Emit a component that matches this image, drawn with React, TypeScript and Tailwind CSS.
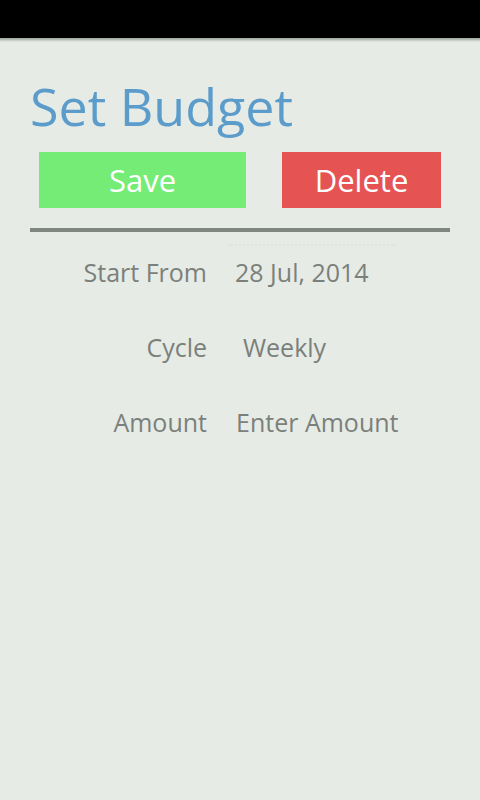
export default function App() {
  const rows = [
    { label: 'Start From', value: '28 Jul, 2014', pad: 'pl-[28px]' },
    { label: 'Cycle', value: 'Weekly', pad: 'pl-[36px]' },
    { label: 'Amount', value: 'Enter Amount', pad: 'pl-[29px]' },
  ];

  return (
    <div className="w-[480px] h-[800px] bg-[#e6ebe6] flex flex-col font-['Open_Sans','Noto_Sans',sans-serif]">
      {/* status bar */}
      <div className="h-[38px] bg-black shrink-0" />
      <div className="h-[4px] bg-gradient-to-b from-[#9aa09a] to-[#e6ebe6] shrink-0" />

      <div className="flex flex-col px-[30px]">
        <h1 className="mt-[34px] text-[52px] leading-[60px] text-[#5b9ccb]">Set Budget</h1>

        <div className="mt-[16px] flex justify-between pl-[9px] pr-[9px]">
          <button className="w-[207px] h-[56px] bg-[#74ec76] text-white text-[31px] leading-none">Save</button>
          <button className="w-[159px] h-[56px] bg-[#e55353] text-white text-[31px] leading-none">Delete</button>
        </div>

        <div className="mt-[20px] h-[4px] bg-[#7f857f]" />

        <div className="flex flex-col text-[25px] text-[#7b807b] mt-[12px]">
          <div className="ml-[198px] w-[168px] border-t-2 border-dotted border-[#dde3dd]" />
          {rows.map((r) => (
            <div key={r.label} className="flex items-baseline h-[75px] pt-[8px]">
              <div className="w-[177px] text-right">{r.label}</div>
              <div className={r.pad}>{r.value}</div>
            </div>
          ))}
        </div>
      </div>
    </div>
  );
}
